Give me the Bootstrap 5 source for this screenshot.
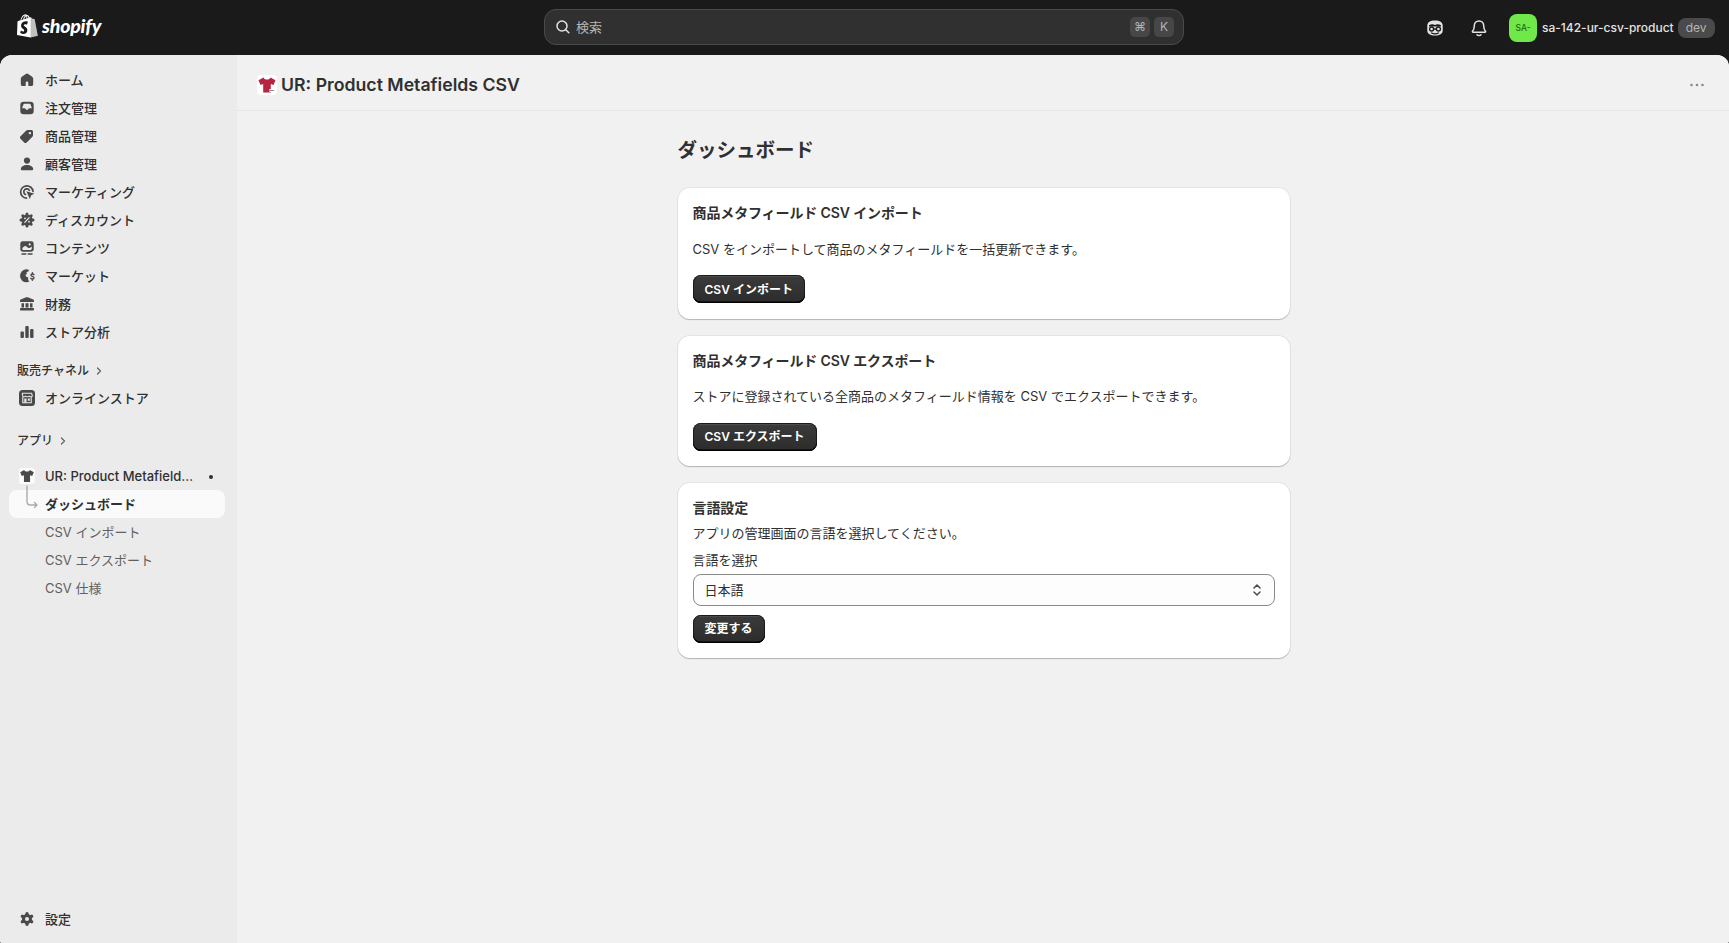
<!DOCTYPE html>
<html lang="ja">
<head>
<meta charset="utf-8">
<title>UR: Product Metafields CSV</title>
<link href="https://cdn.jsdelivr.net/npm/bootstrap@5.3.0/dist/css/bootstrap.min.css" rel="stylesheet">
<style>
html,body{height:100%;overflow:hidden}
body{background:#1a1a1a;font-family:Inter,"Noto Sans CJK JP",sans-serif;font-size:13px;color:#303030;line-height:20px}
.shell{height:943px}
.topbar{height:55px;flex:none;background:#1a1a1a;color:#e3e3e3;position:relative}
.logo-box{position:absolute;left:17px;top:14px;color:#fff}
.wordmark{font-family:Lato,sans-serif;font-style:italic;font-weight:900;font-size:19.5px;letter-spacing:-.2px;line-height:24px;color:#fff}
.searchbox{position:absolute;left:544px;top:9px;width:640px;height:36px;background:#303030;border:1px solid #4a4a4a;border-radius:12px;padding:0 9px 0 10px;color:#b5b5b5}
.searchlabel{margin-left:5px}
.keycap{width:20px;height:20px;border-radius:5px;background:#474747;color:#b5b5b5;font-size:12px;line-height:20px;text-align:center}
.top-right{position:absolute;left:1424px;top:0;height:55px}
.tbicon{width:22px;height:22px;color:#e3e3e3}
.bellgap{margin-left:22px}
.storeavatar{width:28px;height:28px;margin-left:19px;border-radius:8px;background:#70e84a;color:#1f6b17;font-size:8.5px;font-weight:500;line-height:28px;text-align:center}
.storename{margin-left:5px;font-weight:500;font-size:12px;color:#e3e3e3;white-space:nowrap}
.devtag{height:20px;line-height:20px;margin-left:4px;padding:0 8px;border-radius:8px;background:#4a4a4a;color:#b5b5b5;font-size:12px}
.body-row{height:888px;min-height:0;border-radius:12px 12px 2px 2px;overflow:hidden;background:#f1f1f1}
.sidenav{width:237px;flex:none;background:#ebebeb;padding:10.5px 12px 10px 9px}
.navline{height:28px;padding-left:10px;display:flex;align-items:center;gap:10px;color:#303030;font-weight:500;text-decoration:none;white-space:nowrap;border-radius:8px;position:relative}
.navline svg.nico{width:16px;height:16px;flex:none;color:#4a4a4a}
.navsub{color:#616161;font-weight:400;padding-left:36px}
.navon{background:#fafafa;color:#303030;font-weight:650}
.sechead{height:26px;padding-left:8px;margin-top:12px;display:flex;align-items:center;gap:6px;font-size:12px;font-weight:500;color:#303030}
.sechead-apps{margin-top:16.5px}
.apprebase{margin-top:8px}
.trunc{width:150px;overflow:hidden;text-overflow:ellipsis}
.appdot{width:4px;height:4px;border-radius:50%;background:#303030;position:absolute;left:200px;top:13px}
.treeline{position:absolute;left:15px;top:-5px;width:16px;height:24px;color:#ababab}
.appicon{width:16px;height:16px;flex:none;background:#fafafa;border-radius:3px;display:flex;align-items:center;justify-content:center}
.mainpane{min-width:0;background:#f1f1f1}
.pagehead{height:56px;flex:none;border-bottom:1px solid #e6e6e6;padding:5px 24px 0 20px}
.pagehead h2{font-size:17.7px;font-weight:600;line-height:24px;margin:0;color:#303030}
.titleicon{width:20px;height:20px;background:#fff;border-radius:4px;display:flex;align-items:center;justify-content:center;margin-right:4px}
.contentcol{width:612.5px;margin-left:440.5px}
.contentcol h1{font-size:19.5px;font-weight:650;line-height:28px;margin:24.5px 0 24.8px;color:#303030}
.pcard{border:0;border-radius:12px;background:#fff;box-shadow:0 0 0 1px rgba(26,26,26,.05),0 1px 1px rgba(26,26,26,.24);padding:15px 15px 15.5px;margin-bottom:17px;--bs-card-bg:#fff}
.pcard h3{font-size:14px;font-weight:600;line-height:20px;margin:0;color:#303030;letter-spacing:-.12px}
.pcard p{margin:0}
.pcard p.para-main{margin:15.5px 0 16.5px}
.pcard p.para-lang{margin-top:5px}
.pbtn{height:28px;padding:0 12px;border:0;border-radius:8px;background:linear-gradient(#3b3b3b,#2c2c2c);color:#fff;font-size:12px;font-weight:600;line-height:27px;box-shadow:inset 0 -1.5px 0 #000,inset 0 0 0 1px #1a1a1a,inset 0 1.5px 0 rgba(255,255,255,.18)}
.pbtn:hover{background:#303030;color:#fff}
.fieldlabel{margin:7px 0 3.5px;line-height:20px;color:#303030}
.selectwrap{position:relative;margin-bottom:9px}
.selectwrap select{height:32px;font-size:13px;line-height:20px;padding:0 30px 0 11px;border:1px solid #8a8a8a;border-radius:8px;background-color:#fdfdfd;background-image:none;color:#303030;font-family:inherit}
.selectchev{position:absolute;right:10px;top:8px;width:16px;height:16px;color:#4a4a4a;pointer-events:none}
</style>
</head>
<body>
<div class="shell d-flex flex-column">
  <header class="topbar">
    <div class="logo-box d-flex align-items-center gap-1">
      <svg width="21" height="24" viewBox="0 0 21 24" aria-hidden="true"><path fill="#fff" d="M17.6 5.1c0-.1-.1-.2-.2-.2l-2-.2-1.5-1.5c-.1-.1-.4-.1-.5 0l-.8.3C12.100 2.100 11.400 1 10.100 1c-.1 0-.2 0-.2 0C9.500.5 9 .3 8.600.3 5.500.3 4 4.200 3.500 6.200l-2.200.7c-.7.2-.7.2-.8.900L0 20.900 13.500 23.400 20.800 21.800zM11.500 3.900l-1.200.4V4c0-.8-.1-1.400-.3-1.900.7.1 1.200.9 1.500 1.800zM9.200 2.200c.2.500.3 1.200.3 2.200v.2l-2.400.7c.5-1.800 1.400-2.700 2.100-3.100zM8.300 1.400c.1 0 .3 0 .4.100-1 .5-2.100 1.700-2.600 4.100L4.300 6.200C4.800 4.300 6.200 1.400 8.300 1.400z"/><path fill="#000" opacity=".25" d="M17.400 4.900l-2-.2-1.500-1.500c-.1 0-.1-.1-.2-.1L13.500 23.400 20.800 21.800 17.600 5.100c0-.1-.1-.2-.2-.2z"/><path fill="#1a1a1a" d="M10.100 8.200 9.300 11c-.8-.4-1.900-.5-2-.5-1.600.1-1.600 1-1.600 1.300.1 1.400 3.700 1.700 3.900 4.900.2 2.600-1.400 4.300-3.600 4.500-2.700.2-4.100-1.400-4.100-1.400l.6-2.400s1.500 1.100 2.600 1c.8 0 1.100-.7 1-1.100-.1-1.800-3.100-1.700-3.300-4.700-.2-2.500 1.500-5 5.100-5.200 1.400-.1 2.100.3 2.100.3z" transform="translate(1.500 .500) scale(.92)"/></svg>
      <span class="wordmark">shopify</span>
    </div>
    <div class="searchbox d-flex align-items-center">
      <svg width="16" height="16" viewBox="0 0 16 16" fill="none" stroke="#e3e3e3" stroke-width="1.5" stroke-linecap="round" aria-hidden="true"><circle cx="7" cy="7" r="5"/><path d="m10.800 10.800 3 3"/></svg>
      <span class="searchlabel flex-grow-1">検索</span>
      <span class="d-flex gap-1"><span class="keycap">⌘</span><span class="keycap">K</span></span>
    </div>
    <div class="top-right d-flex align-items-center">
      <svg class="tbicon" viewBox="0 0 22 22" aria-hidden="true"><path fill="currentColor" d="M11 3.500c4.800 0 7.700 1.800 7.700 5.300v4.700c0 3.300-3 5-7.700 5s-7.700-1.700-7.700-5V8.800c0-3.500 2.900-5.300 7.700-5.300z"/><path fill="#1a1a1a" d="M5 8.300c2-1.300 4-1.400 6-.4 2-1 4-.9 6 .4v1.300H5z"/><circle cx="7.600" cy="12" r="2" fill="none" stroke="#1a1a1a" stroke-width="1.300"/><circle cx="14.400" cy="12" r="2" fill="none" stroke="#1a1a1a" stroke-width="1.300"/><path d="M9.500 12h3M7.500 16c2.200 1 4.800 1 7 0" stroke="#1a1a1a" stroke-width="1.300" fill="none" stroke-linecap="round"/></svg>
      <svg class="tbicon bellgap" viewBox="0 0 22 22" fill="none" stroke="currentColor" stroke-width="1.500" stroke-linejoin="round" stroke-linecap="round" aria-hidden="true"><path d="M11 4c-2.800 0-4.700 2-4.700 4.700 0 2.700-.6 4.200-1.800 5.600-.3.400 0 .9.500.9h12c.5 0 .8-.5.5-.9-1.200-1.400-1.800-2.900-1.800-5.600C15.700 6 13.800 4 11 4z"/><path d="M9 17.800c.9 1 3.100 1 4 0"/></svg>
      <div class="storeavatar">SA-</div>
      <span class="storename">sa-142-ur-csv-product</span>
      <span class="devtag">dev</span>
    </div>
  </header>

  <div class="body-row d-flex flex-grow-1">
    <nav class="sidenav d-flex flex-column">
      <a class="navline" href="#"><svg class="nico" viewBox="0 0 16 16" fill="currentColor"><path d="M6.800 1.900 2.800 4.700A2.500 2.500 0 0 0 1.800 6.700v5.600c0 1 .8 1.800 1.800 1.800h2.200c.5 0 .9-.4.900-.9v-2.500a1.300 1.300 0 0 1 2.600 0V13.200c0 .5.400.9.900.9h2.200c1 0 1.800-.8 1.800-1.800V6.700c0-.8-.4-1.500-1-2L9.200 1.900a2 2 0 0 0-2.400 0z"/></svg>ホーム</a>
      <a class="navline" href="#"><svg class="nico" viewBox="0 0 16 16"><rect x="1.300" y="1.800" width="13.400" height="12.400" rx="3.200" fill="currentColor"/><path fill="#ebebeb" d="M3.100 8.300 4.400 4.500c.2-.5.500-.8 1-.8h5.200c.5 0 .8.300 1 .8l1.300 3.800h-2.500c-.5 0-.8.200-1 .6-.4.700-1 .9-1.400.9s-1-.2-1.400-.9c-.2-.4-.5-.6-1-.6z"/></svg>注文管理</a>
      <a class="navline" href="#"><svg class="nico" viewBox="0 0 16 16"><path fill="currentColor" d="M1.500 8.300 7 2.800c.5-.5 1.100-.8 1.800-.8h3.600c.9 0 1.600.7 1.600 1.600v3.600c0 .7-.3 1.300-.8 1.800l-5.500 5.500c-.7.700-1.800.7-2.500 0L1.500 10.800c-.7-.7-.7-1.800 0-2.500z"/><circle cx="10.900" cy="5.100" r="1.200" fill="#ebebeb"/></svg>商品管理</a>
      <a class="navline" href="#"><svg class="nico" viewBox="0 0 16 16" fill="currentColor"><circle cx="8" cy="4.600" r="3.100"/><path d="M1.800 13c0-2.200 2.700-4 6.200-4s6.200 1.800 6.200 4c0 .8-.6 1.300-1.300 1.300H3.100c-.7 0-1.300-.5-1.300-1.300z"/></svg>顧客管理</a>
      <a class="navline" href="#"><svg class="nico" viewBox="0 0 16 16" fill="none"><path stroke="currentColor" stroke-width="1.700" stroke-linecap="round" d="M14 7.300A6.200 6.200 0 1 0 7.500 14.200"/><path stroke="currentColor" stroke-width="1.700" stroke-linecap="round" d="M10.400 6.300A3 3 0 1 0 6.500 10.500"/><path fill="currentColor" d="m7.400 7.300 8 2.500-3.200 1.500-1.400 3.700z"/></svg>マーケティング</a>
      <a class="navline" href="#"><svg class="nico" viewBox="0 0 16 16"><circle cx="8" cy="8" r="5.600" fill="currentColor"/><g stroke="currentColor" stroke-width="3" stroke-linecap="round"><path d="M8 2v12M2 8h12M3.800 3.800l8.400 8.400M12.200 3.800l-8.400 8.400"/></g><path stroke="#ebebeb" stroke-width="1.200" stroke-linecap="round" d="m5.800 10.300 4.400-4.600"/><circle cx="6" cy="6.300" r=".9" fill="#ebebeb"/><circle cx="10" cy="9.700" r=".9" fill="#ebebeb"/></svg>ディスカウント</a>
      <a class="navline" href="#"><svg class="nico" viewBox="0 0 16 16"><rect x="1.300" y="1.300" width="13.400" height="10.400" rx="2.400" fill="currentColor"/><path fill="#ebebeb" d="M3.200 8.700c1-2 2.400-2.900 3.700-2.500 1.400.5 1.500 1.800 3 1.800 1.100 0 2.100-.6 2.900-1.500v2c0 .9-.7 1.500-1.500 1.500H4.800c-.9 0-1.600-.3-1.600-1.300z"/><circle cx="10.700" cy="4.400" r="1.100" fill="#ebebeb"/><path stroke="currentColor" stroke-width="1.500" stroke-linecap="round" d="M3 14.100h3.800m2.400 0H13"/></svg>コンテンツ</a>
      <a class="navline" href="#"><svg class="nico" viewBox="0 0 16 16"><path fill="currentColor" d="M7.500 1.300c.9 0 1.800.2 2.600.6L9.200 3.500 7.500 4.200l.4 1.700-1.600 1 1.300 2 1.500.4.100 2.800 1.100 1.400c-.8.500-1.800.8-2.800.8a6.400 6.400 0 0 1 0-13z"/><path stroke="currentColor" stroke-width="1.400" fill="none" stroke-linecap="round" d="M15 6.700c-.4-.8-2.900-1.100-3 .4-.1 1.600 3.100 1.100 3 2.800-.1 1.600-2.700 1.400-3.200.3M13.400 4.700v1.100m0 5.300v1.100"/></svg>マーケット</a>
      <a class="navline" href="#"><svg class="nico" viewBox="0 0 16 16" fill="currentColor"><path d="M7.200 1.300c.5-.2 1.100-.2 1.600 0l5.500 2.200c.4.200.7.600.7 1v.9c0 .4-.3.700-.7.700H1.700c-.4 0-.7-.3-.7-.7v-.9c0-.4.300-.8.700-1z"/><path d="M2.500 7.200h2.500v4.300H2.500zm4 0h3v4.300h-3zm4.500 0h2.500v4.300H11zM1.700 12h12.600c.4 0 .7.300.7.700v1c0 .4-.3.700-.7.700H1.700c-.4 0-.7-.3-.7-.7v-1c0-.4.300-.7.700-.7z"/></svg>財務</a>
      <a class="navline" href="#"><svg class="nico" viewBox="0 0 16 16" fill="currentColor"><rect x="1.500" y="7.500" width="3.400" height="6.500" rx="1"/><rect x="6.300" y="2" width="3.400" height="12" rx="1"/><rect x="11.100" y="5" width="3.400" height="9" rx="1"/></svg>ストア分析</a>

      <div class="sechead">販売チャネル <svg width="8" height="10" viewBox="0 0 8 10" fill="none" stroke="#616161" stroke-width="1.200" stroke-linecap="round" stroke-linejoin="round"><path d="m2.500 2 3 3-3 3"/></svg></div>
      <a class="navline" href="#"><svg class="nico" viewBox="0 0 16 16"><rect width="16" height="16" rx="3.500" fill="currentColor"/><path fill="none" stroke="#ebebeb" stroke-width="1.100" stroke-linejoin="round" d="M3.300 3.300h9.400l.6 2.700c0 1-3 1-3 0 0 1-3.600 1-3.600 0 0 1-3 1-3 0zM3.800 7v5.700h8.400V7"/><path fill="#ebebeb" d="M5.300 8.600h2.200v4H5.300zm3.500 0h2v2.200h-2z"/></svg>オンラインストア</a>

      <div class="sechead sechead-apps">アプリ <svg width="8" height="10" viewBox="0 0 8 10" fill="none" stroke="#616161" stroke-width="1.200" stroke-linecap="round" stroke-linejoin="round"><path d="m2.500 2 3 3-3 3"/></svg></div>
      <a class="navline apprebase" href="#"><span class="appicon"><svg width="16" height="16" viewBox="0 0 20 20"><path fill="#4a4a4a" d="M6.500 2.500 1.500 5.300l2 4.700 2.700-.9V17.500h7.600V9.100l2.700.9 2-4.700-5-2.800c-.6 1.400-1.800 2-3.500 2s-2.900-.6-3.500-2z"/></svg></span><span class="trunc">UR: Product Metafields CSV</span><span class="appdot"></span></a>
      <a class="navline navsub navon" href="#"><svg class="treeline" viewBox="0 0 16 24" fill="none" stroke="currentColor" stroke-width="1.400" stroke-linecap="round" stroke-linejoin="round"><path d="M3 1v15.500c0 2.500 1 3.500 3.500 3.500H13m-2.500-2.500 2.500 2.500-2.500 2.500"/></svg>ダッシュボード</a>
      <a class="navline navsub" href="#">CSV インポート</a>
      <a class="navline navsub" href="#">CSV エクスポート</a>
      <a class="navline navsub" href="#">CSV 仕様</a>

      <a class="navline mt-auto" href="#"><svg class="nico" viewBox="0 0 16 16"><circle cx="8" cy="8" r="5" fill="currentColor"/><g stroke="currentColor" stroke-width="3.400" stroke-linecap="round"><path d="M8 2.700v10.600M3.400 5.350l9.200 5.300M12.600 5.350l-9.200 5.300"/></g><circle cx="8" cy="8" r="2" fill="#ebebeb"/></svg>設定</a>
    </nav>

    <main class="mainpane flex-grow-1 d-flex flex-column">
      <div class="pagehead d-flex align-items-center">
        <span class="titleicon"><svg width="20" height="20" viewBox="0 0 20 20"><path fill="#b72340" d="M6.500 2.500 1.500 5.300l2 4.700 2.700-.9V17.500h7.600V9.100l2.700.9 2-4.700-5-2.800c-.6 1.400-1.800 2-3.500 2s-2.900-.6-3.500-2z"/><rect x="12.500" y="14" width="5" height="3" fill="#fff"/><rect x="13" y="15" width="4" height="1" fill="#8a8a8a"/></svg></span>
        <h2 class="flex-grow-1">UR: Product Metafields CSV</h2>
        <svg width="16" height="16" viewBox="0 0 16 16" fill="#8a8a8a"><circle cx="2.500" cy="8" r="1.300"/><circle cx="8" cy="8" r="1.300"/><circle cx="13.500" cy="8" r="1.300"/></svg>
      </div>
      <div class="contentcol">
        <h1>ダッシュボード</h1>
        <section class="card pcard">
          <h3>商品メタフィールド CSV インポート</h3>
          <p class="para-main">CSV をインポートして商品のメタフィールドを一括更新できます。</p>
          <div><button class="btn pbtn" type="button">CSV インポート</button></div>
        </section>
        <section class="card pcard">
          <h3>商品メタフィールド CSV エクスポート</h3>
          <p class="para-main">ストアに登録されている全商品のメタフィールド情報を CSV でエクスポートできます。</p>
          <div><button class="btn pbtn" type="button">CSV エクスポート</button></div>
        </section>
        <section class="card pcard">
          <h3>言語設定</h3>
          <p class="para-lang">アプリの管理画面の言語を選択してください。</p>
          <label class="fieldlabel form-label" for="lang">言語を選択</label>
          <div class="selectwrap">
            <select id="lang" class="form-select"><option>日本語</option></select>
            <svg class="selectchev" viewBox="0 0 16 16" fill="none" stroke="currentColor" stroke-width="1.500" stroke-linecap="round" stroke-linejoin="round"><path d="m5 6 3-3 3 3M5 10l3 3 3-3"/></svg>
          </div>
          <div><button class="btn pbtn" type="button">変更する</button></div>
        </section>
      </div>
    </main>
  </div>
</div>
<script src="https://cdn.jsdelivr.net/npm/bootstrap@5.3.0/dist/js/bootstrap.bundle.min.js"></script>
</body>
</html>
